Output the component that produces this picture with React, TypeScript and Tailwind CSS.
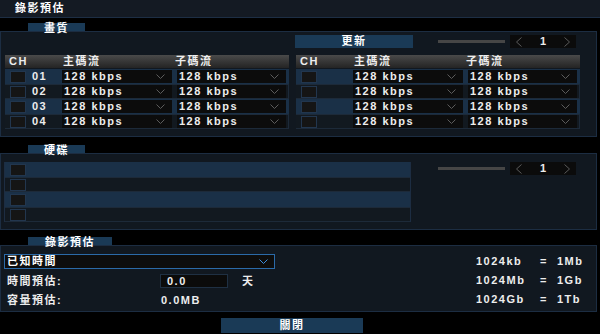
import { memo } from "react";

const ChevronDown = ({ className }: { className?: string }) => (
  <svg width="9" height="5" viewBox="0 0 9 5" className={className}>
    <path d="M0.5 0.5 L4.5 4.5 L8.5 0.5" fill="none" stroke="currentColor" strokeWidth="1" />
  </svg>
);

const ChevronSide = ({ dir }: { dir: "left" | "right" }) => (
  <svg width="6" height="10" viewBox="0 0 6 10" className="text-[#5a5a5a]">
    <path
      d={dir === "left" ? "M5.5 0.5 L0.5 5 L5.5 9.5" : "M0.5 0.5 L5.5 5 L0.5 9.5"}
      fill="none"
      stroke="currentColor"
      strokeWidth="1"
    />
  </svg>
);

const Tab = ({ label, wide }: { label: string; wide?: boolean }) => (
  <div
    className={`ml-[28px] flex h-[8px] items-center justify-center bg-[#1a3a56] leading-[8px] text-white ${
      wide ? "w-[84px]" : "w-[57px]"
    }`}
  >
    <span className="translate-y-[1px]">{label}</span>
  </div>
);

const Checkbox = () => (
  <div className="h-[12px] w-[16px] shrink-0 border border-[#22364e] bg-[#151515]" />
);

const Select = ({ w }: { w: string }) => (
  <div className={`flex h-[13px] items-center justify-between bg-[#0c0c0c] pl-[2px] pr-[7px] ${w}`}>
    <span>128 kbps</span>
    <ChevronDown className="text-[#5c5c5c]" />
  </div>
);

const Spinner = () => (
  <div className="ml-[5px] flex h-[13px] w-[66px] items-center justify-between bg-[#0b0b0b] px-[6px]">
    <ChevronSide dir="left" />
    <span className="tracking-normal">1</span>
    <ChevronSide dir="right" />
  </div>
);

const StreamTable = ({ numbered }: { numbered?: boolean }) => {
  const rows = ["01", "02", "03", "04"];
  return (
    <div className="flex w-[284px] flex-col">
      {/* header */}
      <div className="mb-[1px] flex h-[13px] items-center bg-gradient-to-b from-[#4a4a4a] to-[#242424]">
        <span className="w-[57px] pl-[4px]">CH</span>
        <span className="w-[113px] pl-[1px]">主碼流</span>
        <span>子碼流</span>
      </div>
      {rows.map((n, i) => (
        <div
          key={n}
          className={`flex h-[15px] items-center ${
            i % 2 === 0 ? "bg-[#1a3047]" : "border-y border-r border-[#1d2a39] bg-[#121920]"
          }`}
        >
          <div className="flex w-[57px] items-center pl-[5px]">
            <Checkbox />
            {numbered && <span className="ml-[6px]">{n}</span>}
          </div>
          <Select w="w-[110px]" />
          <div className="w-[5px]" />
          <Select w="w-[109px]" />
        </div>
      ))}
    </div>
  );
};

const App = () => {
  return (
    <div className="h-[334px] w-[600px] overflow-hidden bg-black font-['Liberation_Sans','Noto_Sans_CJK_TC',sans-serif] text-[11px] font-bold tracking-[1.5px] text-[#ededed]">
      {/* title */}
      <div className="flex h-[18px] items-center border-b border-[#1d2e44] bg-[#141a23] pl-[15px] text-white">
        錄影預估
      </div>

      {/* 畫質 */}
      <div className="mt-[5px]">
        <Tab label="畫質" />
        <div className="w-[597px] border border-[#1c2d42] bg-[#111820] px-[4px] pb-[7px] pt-[3px]">
          <div className="flex h-[13px] items-center">
            <div className="ml-[290px] flex h-[13px] w-[118px] items-center justify-center bg-[#1a3a56] text-white">
              更新
            </div>
            <div className="ml-[25px] h-[3px] w-[67px] bg-[#464646]" />
            <Spinner />
          </div>
          <div className="mt-[7px] flex gap-[7px]">
            <StreamTable numbered />
            <StreamTable />
          </div>
        </div>
      </div>

      {/* 硬碟 */}
      <div className="mt-[8px]">
        <Tab label="硬碟" />
        <div className="flex w-[597px] border border-[#1c2d42] bg-[#111820] pb-[7px] pl-[3px] pt-[8px]">
          <div className="flex w-[407px] flex-col border-x border-[#1d2d42]">
            {[0, 1, 2, 3].map((i) => (
              <div
                key={i}
                className={`flex h-[15px] items-center pl-[5px] ${
                  i % 2 === 0 ? "bg-[#1a3047]" : "border-y border-[#1d2a39] bg-[#121920]"
                }`}
              >
                <Checkbox />
              </div>
            ))}
          </div>
          <div className="flex h-[13px] items-center">
            <div className="ml-[27px] h-[3px] w-[67px] bg-[#464646]" />
            <Spinner />
          </div>
        </div>
      </div>

      {/* 錄影預估 */}
      <div className="mt-[7px]">
        <Tab label="錄影預估" wide />
        <div className="flex w-[597px] border border-[#1c2d42] bg-[#111820] pb-[4px] pl-[3px] pt-[8px]">
          <div className="flex w-[271px] flex-col">
            <div className="flex h-[15px] items-center justify-between border border-[#2b6aa8] bg-[#0d0d0d] pl-[2px] pr-[6px] text-white">
              <span>已知時間</span>
              <ChevronDown className="text-[#3d8ddb]" />
            </div>
            <div className="mt-[5px] flex h-[14px] items-center">
              <span className="w-[156px] pl-[3px]">時間預估:</span>
              <div className="flex h-[14px] w-[68px] items-center border border-[#1f3043] bg-[#0b0b0b] pl-[6px]">
                0.0
              </div>
              <span className="ml-[14px]">天</span>
            </div>
            <div className="mt-[5px] flex h-[14px] items-center">
              <span className="w-[157px] pl-[3px]">容量預估:</span>
              <span>0.0MB</span>
            </div>
          </div>
          <div className="ml-[201px] -mt-[2px] flex h-[55px] flex-col">
            {[
              ["1024kb", "1Mb"],
              ["1024Mb", "1Gb"],
              ["1024Gb", "1Tb"],
            ].map(([a, b]) => (
              <div key={a} className="flex h-[19px] shrink-0 items-center">
                <span className="w-[64px]">{a}</span>
                <span className="w-[17px]">=</span>
                <span>{b}</span>
              </div>
            ))}
          </div>
        </div>
      </div>

      {/* close */}
      <div className="ml-[221px] mt-[6px] flex h-[15px] w-[142px] items-center justify-center bg-[#1a3a56] text-white">
        關閉
      </div>
    </div>
  );
};

export default memo(App);
